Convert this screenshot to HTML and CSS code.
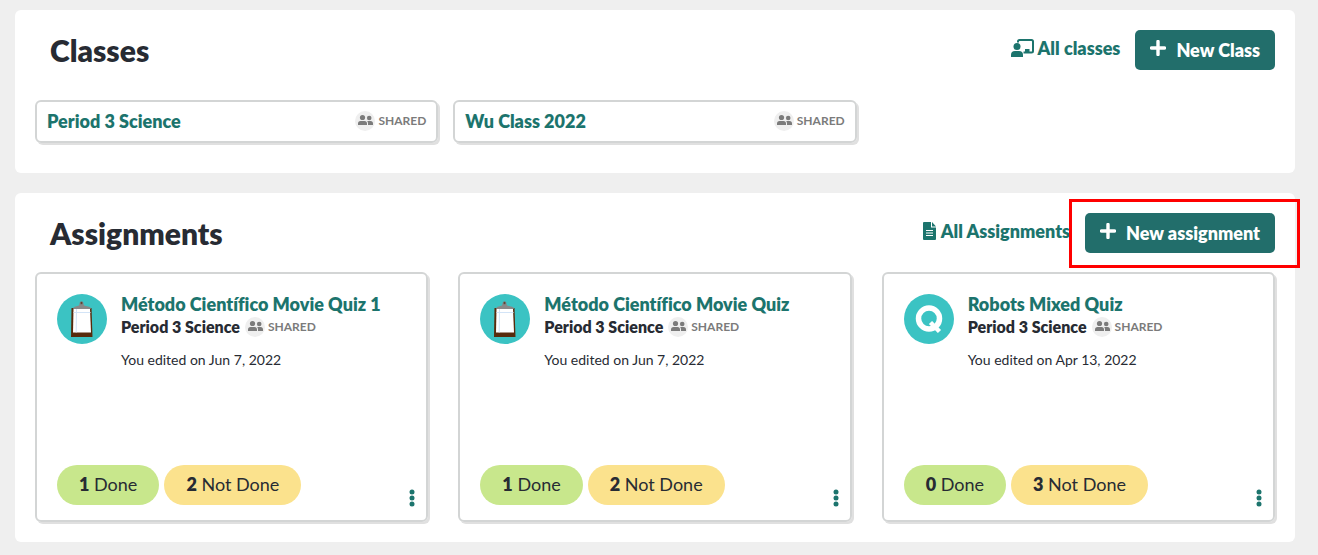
FILE: index.html
```html
<!DOCTYPE html>
<html lang="en">
<head>
    <meta charset="UTF-8">
    <meta name="viewport" content="width=device-width, initial-scale=1.0">
    <title>Classes and Assignments</title>
    <link rel="stylesheet" href="styles.css">
</head>
<body>
    <!-- shared icon shapes -->
    <svg class="sprite" aria-hidden="true">
        <symbol id="people" viewBox="0 0 20 20">
            <circle cx="10" cy="10" r="10" fill="#efefef"/>
            <circle cx="7.500" cy="6.500" r="2.600"/>
            <circle cx="14.200" cy="7" r="2.300"/>
            <path d="M3 14v-1.500q0-2.500 2.500-2.500h4q2.500 0 2.500 2.500V14z"/>
            <path d="M13 14v-1.500q0-1.500-.8-2.500h3.300q2.500 0 2.500 2.500V14z"/>
        </symbol>
        <symbol id="plus" viewBox="0 0 16 16">
            <path d="M8 1.500v13M1.500 8h13" stroke="#fff" stroke-width="3.400" stroke-linecap="round"/>
        </symbol>
        <symbol id="clipboard" viewBox="0 0 50 50">
            <circle cx="25" cy="25" r="25" fill="#3bc3c3"/>
            <path d="M14.500 14h20l1 29H14z" fill="#572b0c"/>
            <path d="M16.500 15h16.500l1 23.500H16z" fill="#fff"/>
            <path d="M19.500 15l-.3 23.500M16.500 18.500h17" stroke="#d3e4f7" stroke-width="1"/>
            <path d="M23 8h3l1 3.500 6 1.500 1 2H16l1-2 5-1.500z" fill="#888"/>
            <circle cx="24.500" cy="9" r="1.700" fill="#777"/>
            <circle cx="24.500" cy="9" r=".8" fill="#572b0c"/>
        </symbol>
        <symbol id="quiz" viewBox="0 0 50 50">
            <circle cx="25" cy="25" r="25" fill="#3bc3c3"/>
            <circle cx="25" cy="24.500" r="10.500" fill="none" stroke="#fff" stroke-width="5.500"/>
            <path d="M26.500 28.500l9 9" stroke="#fff" stroke-width="4.500"/>
        </symbol>
        <symbol id="dots" viewBox="0 0 6 18">
            <circle cx="3" cy="3" r="2.500"/>
            <circle cx="3" cy="9" r="2.500"/>
            <circle cx="3" cy="15" r="2.500"/>
        </symbol>
    </svg>

    <section class="panel classes">
        <header class="panel-header">
            <h2>Classes</h2>
            <a class="all-link" href="#">
                <svg width="23" height="18" viewBox="0 0 23 18">
                    <path d="M7 3.500V2.500q0-1.500 1.500-1.500h12q1.500 0 1.500 1.500v9.500q0 1.500-1.500 1.500h-8" fill="none" stroke="currentColor" stroke-width="2"/>
                    <path d="M14 13v-3h4.500v3z"/>
                    <circle cx="6" cy="7.500" r="3.500"/>
                    <path d="M0 18v-2q0-4 4-4h4q4 0 4 4v2z"/>
                </svg>
                All classes
            </a>
            <button class="new-button" type="button"><svg width="16" height="16"><use href="#plus"/></svg>New Class</button>
        </header>
        <div class="class-list">
            <div class="class-card">
                <a href="#">Period 3 Science</a>
                <span class="shared"><svg width="20" height="20"><use href="#people"/></svg>SHARED</span>
            </div>
            <div class="class-card">
                <a href="#">Wu Class 2022</a>
                <span class="shared"><svg width="20" height="20"><use href="#people"/></svg>SHARED</span>
            </div>
        </div>
    </section>

    <section class="panel">
        <header class="panel-header">
            <h2>Assignments</h2>
            <a class="all-link" href="#">
                <svg width="14" height="18" viewBox="0 0 14 18">
                    <path d="M1 0h7v5.500h5V17q0 1-1 1H1q-1 0-1-1V1q0-1 1-1z"/>
                    <path d="M9 0l4 4.500H9z"/>
                    <path d="M3 8.500h7M3 11h7M3 13.500h7" stroke="#fff" stroke-width="1"/>
                </svg>
                All Assignments
            </a>
            <div class="highlight">
                <button class="new-button" type="button"><svg width="16" height="16"><use href="#plus"/></svg>New assignment</button>
            </div>
        </header>
        <div class="assignment-list">
            <article class="assignment">
                <div class="assignment-top">
                    <svg width="50" height="50"><use href="#clipboard"/></svg>
                    <div>
                        <h3><a href="#">Método Científico Movie Quiz 1</a></h3>
                        <p class="class-name">Period 3 Science <span class="shared"><svg width="20" height="20"><use href="#people"/></svg>SHARED</span></p>
                        <p class="edited">You edited on Jun 7, 2022</p>
                    </div>
                </div>
                <div class="assignment-bottom">
                    <span class="pill done"><b>1</b> Done</span>
                    <span class="pill not-done"><b>2</b> Not Done</span>
                    <button class="menu" type="button" aria-label="More options"><svg width="6" height="18"><use href="#dots"/></svg></button>
                </div>
            </article>
            <article class="assignment">
                <div class="assignment-top">
                    <svg width="50" height="50"><use href="#clipboard"/></svg>
                    <div>
                        <h3><a href="#">Método Científico Movie Quiz</a></h3>
                        <p class="class-name">Period 3 Science <span class="shared"><svg width="20" height="20"><use href="#people"/></svg>SHARED</span></p>
                        <p class="edited">You edited on Jun 7, 2022</p>
                    </div>
                </div>
                <div class="assignment-bottom">
                    <span class="pill done"><b>1</b> Done</span>
                    <span class="pill not-done"><b>2</b> Not Done</span>
                    <button class="menu" type="button" aria-label="More options"><svg width="6" height="18"><use href="#dots"/></svg></button>
                </div>
            </article>
            <article class="assignment">
                <div class="assignment-top">
                    <svg width="50" height="50"><use href="#quiz"/></svg>
                    <div>
                        <h3><a href="#">Robots Mixed Quiz</a></h3>
                        <p class="class-name">Period 3 Science <span class="shared"><svg width="20" height="20"><use href="#people"/></svg>SHARED</span></p>
                        <p class="edited">You edited on Apr 13, 2022</p>
                    </div>
                </div>
                <div class="assignment-bottom">
                    <span class="pill done"><b>0</b> Done</span>
                    <span class="pill not-done"><b>3</b> Not Done</span>
                    <button class="menu" type="button" aria-label="More options"><svg width="6" height="18"><use href="#dots"/></svg></button>
                </div>
            </article>
        </div>
    </section>
</body>
</html>
```
FILE: styles.css
```css
* {
    box-sizing: border-box;
}
body {
    margin: 0;
    padding: 10px 23px 13px 15px;
    background-color: #efefef;
    color: #272b33;
    font-family: Lato, "Open Sans", sans-serif;
    font-size: 18px;
    font-variant-ligatures: none;
}
h2, h3, p {
    margin: 0;
}
h2, h3, b {
    font-weight: 800;
}
a {
    color: #1c746d;
    font-weight: 800;
    text-decoration: none;
}
svg {
    flex: none;
    fill: currentColor;
}
button {
    border: none;
    font: inherit;
    cursor: pointer;
}
.sprite {
    position: absolute;
    width: 0;
    height: 0;
}
.panel {
    padding: 20px;
    border-radius: 6px;
    background-color: #fff;
}
.classes {
    margin-bottom: 20px;
    padding-bottom: 30px;
}
.panel-header {
    display: flex;
    align-items: center;
    gap: 15px;
    height: 40px;
    margin-bottom: 19px;
    padding-left: 15px;
}
.classes .panel-header {
    margin-bottom: 30px;
}
h2 {
    margin-right: auto;
    font-size: 30px;
    line-height: 40px;
}
.all-link {
    display: flex;
    align-items: center;
    gap: 4px;
    padding-bottom: 4px;
}
.new-button {
    display: flex;
    align-items: center;
    gap: 10px;
    height: 40px;
    padding: 0 15px 1px;
    border-radius: 5px;
    background-color: #226e6b;
    color: #fff;
    font-weight: 800;
}
.new-button svg {
    margin-bottom: 3px;
}
.highlight {
    position: relative;
}
.highlight::after {
    content: "";
    position: absolute;
    inset: -14px -25px -15px -16px;
    border: 3px solid #f00;
    pointer-events: none;
}
.class-list {
    display: grid;
    grid-template-columns: repeat(3, 1fr);
    gap: 15px;
}
.class-card, .assignment {
    border: 2px solid #d3d5d5;
    border-radius: 6px;
    box-shadow: 2px 2px 0 #e0e0e0;
}
.class-card {
    display: flex;
    justify-content: space-between;
    align-items: center;
    height: 43px;
    padding: 0 10px 2px;
}
.shared {
    display: inline-flex;
    align-items: center;
    gap: 3px;
    color: #7b7b7b;
    font-size: 12px;
    font-weight: bold;
}
.assignment-list {
    display: grid;
    grid-template-columns: repeat(3, 1fr);
    gap: 30px;
}
.assignment {
    display: flex;
    flex-direction: column;
    min-height: 250px;
    padding: 20px 20px 15px;
}
.assignment-top {
    display: flex;
    gap: 14px;
}
h3 {
    font-size: 18px;
    line-height: 21px;
}
.class-name {
    display: flex;
    align-items: center;
    gap: 5px;
    font-size: 16px;
    font-weight: 800;
    line-height: 24px;
}
.edited {
    margin-top: 11px;
    font-size: 14px;
    line-height: 20px;
}
.assignment-bottom {
    display: flex;
    align-items: center;
    gap: 5px;
    margin-top: auto;
}
.pill {
    height: 40px;
    padding: 0 22px;
    border-radius: 20px;
    line-height: 38px;
}
.done {
    background-color: #c8e78c;
}
.not-done {
    background-color: #fbe28d;
}
.menu {
    display: flex;
    align-self: flex-end;
    margin: 0 -9px -2px auto;
    padding: 0;
    background: none;
    color: #1c746d;
}
```
